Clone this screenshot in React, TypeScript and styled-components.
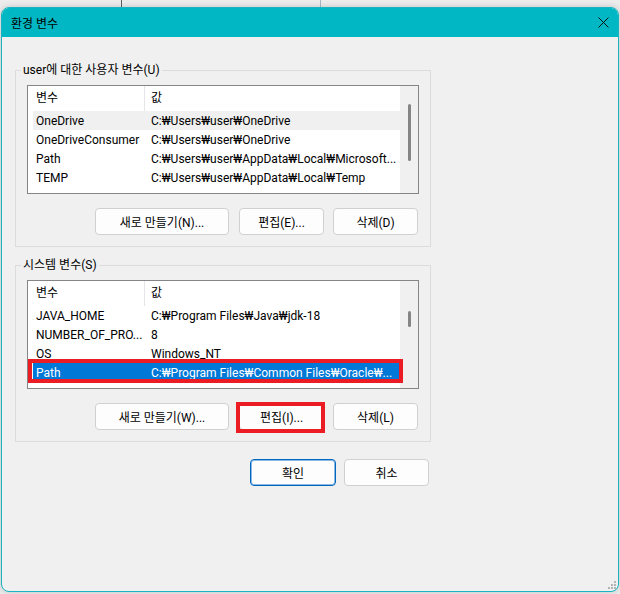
import { FC } from 'react';
import styled, { createGlobalStyle } from 'styled-components';

interface VarRow {
  name: string;
  value: string;
  state?: 'hover' | 'selected';
}

const userVars: VarRow[] = [
  { name: 'OneDrive', value: 'C:₩Users₩user₩OneDrive', state: 'hover' },
  { name: 'OneDriveConsumer', value: 'C:₩Users₩user₩OneDrive' },
  { name: 'Path', value: 'C:₩Users₩user₩AppData₩Local₩Microsoft...' },
  { name: 'TEMP', value: 'C:₩Users₩user₩AppData₩Local₩Temp' },
];

const systemVars: VarRow[] = [
  { name: 'JAVA_HOME', value: 'C:₩Program Files₩Java₩jdk-18' },
  { name: 'NUMBER_OF_PRO...', value: '8' },
  { name: 'OS', value: 'Windows_NT' },
  { name: 'Path', value: 'C:₩Program Files₩Common Files₩Oracle₩...', state: 'selected' },
];

interface VarListProps {
  rows: VarRow[];
  thumbTop: number;
  thumbHeight: number;
  markedRow?: number;
}

const HEADER_HEIGHT = 25;
const ROW_HEIGHT = 19;

const VarList: FC<VarListProps> = (props) => {
  return (
    <ListBoxStyled>
      <ListBodyStyled>
        <HeaderRowStyled>
          <HeaderCellStyled $first>변수</HeaderCellStyled>
          <HeaderCellStyled>값</HeaderCellStyled>
        </HeaderRowStyled>
        {props.rows.map((row) => (
          <RowStyled key={row.name} $state={row.state}>
            <CellStyled $first>{row.name}</CellStyled>
            <CellStyled>{row.value}</CellStyled>
          </RowStyled>
        ))}
      </ListBodyStyled>
      <TrackStyled>
        <ThumbStyled $top={props.thumbTop} $height={props.thumbHeight} />
      </TrackStyled>
      {props.markedRow !== undefined && <RowMarkStyled $row={props.markedRow} />}
    </ListBoxStyled>
  );
};

const App: FC = () => {
  return (
    <>
      <GlobalStyle />
      <DesktopStyled>
        <WindowStyled>
          <TitleBarStyled>
            <span>환경 변수</span>
            <svg width="11" height="11" viewBox="0 0 11 11">
              <path d="M0.5 0.5 L10.5 10.5 M10.5 0.5 L0.5 10.5" stroke="#111" strokeWidth="1" fill="none" />
            </svg>
          </TitleBarStyled>

          <ContentStyled>
            <GroupStyled>
              <LegendStyled>user에 대한 사용자 변수(U)</LegendStyled>
              <VarList rows={userVars} thumbTop={18} thumbHeight={57} />
              <ButtonRowStyled>
                <ButtonStyled $width={134} $space={10}>새로 만들기(N)...</ButtonStyled>
                <ButtonStyled $width={85} $space={9}>편집(E)...</ButtonStyled>
                <ButtonStyled $width={85}>삭제(D)</ButtonStyled>
              </ButtonRowStyled>
            </GroupStyled>

            <GroupStyled $gap={10}>
              <LegendStyled>시스템 변수(S)</LegendStyled>
              <VarList rows={systemVars} thumbTop={30} thumbHeight={16} markedRow={3} />
              <ButtonRowStyled>
                <ButtonStyled $width={134} $space={10}>새로 만들기(W)...</ButtonStyled>
                <ButtonStyled $width={85} $space={9} $marked>편집(I)...</ButtonStyled>
                <ButtonStyled $width={85}>삭제(L)</ButtonStyled>
              </ButtonRowStyled>
            </GroupStyled>

            <FooterStyled>
              <ButtonStyled $width={86} $space={8} $primary>확인</ButtonStyled>
              <ButtonStyled $width={85}>취소</ButtonStyled>
            </FooterStyled>
          </ContentStyled>

          <GripStyled width="9" height="9" viewBox="0 0 9 9">
            <rect x="6" y="0" width="2" height="2" fill="#b4b4b4" />
            <rect x="3" y="3" width="2" height="2" fill="#b4b4b4" />
            <rect x="6" y="3" width="2" height="2" fill="#b4b4b4" />
            <rect x="0" y="6" width="2" height="2" fill="#b4b4b4" />
            <rect x="3" y="6" width="2" height="2" fill="#b4b4b4" />
            <rect x="6" y="6" width="2" height="2" fill="#b4b4b4" />
          </GripStyled>
        </WindowStyled>
      </DesktopStyled>
    </>
  );
};

const GlobalStyle = createGlobalStyle`
  html, body {
    margin: 0;
    padding: 0;
  }

  body {
    width: 620px;
    height: 594px;
    overflow: hidden;
    background-color: #ececec;
    background-image: linear-gradient(
      to right,
      transparent 121px,
      #5e5e5e 121px,
      #5e5e5e 122px,
      transparent 122px,
      transparent 320px,
      #a6b8c6 320px,
      #a6b8c6 321px,
      transparent 321px
    );
    background-size: 100% 8px;
    background-repeat: no-repeat;
    font-family: Roboto, "Noto Sans CJK KR", sans-serif;
    font-size: 12px;
    color: #000;
  }
`;

const DesktopStyled = styled.div`
  box-sizing: border-box;
  width: 620px;
  height: 594px;
  padding: 7px 1px 0 1px;
`;

const WindowStyled = styled.div`
  position: relative;
  box-sizing: border-box;
  width: 618px;
  height: 585px;
  border: 1px solid #19b4c2;
  border-radius: 8px;
  overflow: hidden;
  background: #f0f0f0;
  box-shadow: 0 0 6px rgba(0, 0, 0, 0.18);
`;

const TitleBarStyled = styled.div`
  display: flex;
  align-items: center;
  justify-content: space-between;
  height: 29px;
  padding: 0 9px 0 9px;
  background: #00b7c3;
  font-size: 12px;

  & svg {
    display: block;
  }
`;

const ContentStyled = styled.div`
  display: flex;
  flex-direction: column;
  padding: 25px 0 0 13px;
`;

const GroupStyled = styled.fieldset<{ $gap?: number }>`
  box-sizing: border-box;
  width: 416px;
  min-width: 0;
  margin: ${(p) => p.$gap ?? 0}px 0 0 0;
  padding: 7px 11px 11px 11px;
  border: 1px solid #dcdcdc;
`;

const LegendStyled = styled.legend`
  margin-left: -6px;
  padding: 0 2px;
  line-height: 16px;
`;

const ListBoxStyled = styled.div`
  position: relative;
  box-sizing: border-box;
  display: flex;
  height: 109px;
  border: 1px solid #858585;
  background: #fff;
`;

const ListBodyStyled = styled.div`
  flex: 1;
  min-width: 0;
  overflow: hidden;
`;

const HeaderRowStyled = styled.div`
  display: grid;
  grid-template-columns: 117px 1fr;
  height: ${HEADER_HEIGHT}px;
`;

const HeaderCellStyled = styled.div<{ $first?: boolean }>`
  padding-left: ${(p) => (p.$first ? 8 : 6)}px;
  line-height: ${HEADER_HEIGHT - 1}px;
  border-right: ${(p) => (p.$first ? '1px solid #e5e5e5' : 'none')};
`;

const RowStyled = styled.div<{ $state?: 'hover' | 'selected' }>`
  display: grid;
  grid-template-columns: 111px 1fr;
  height: ${ROW_HEIGHT}px;
  margin-left: 5px;
  line-height: ${ROW_HEIGHT + 1}px;
  background: ${(p) =>
    p.$state === 'selected' ? '#0078d7' : p.$state === 'hover' ? '#f0f0f0' : 'transparent'};
  color: ${(p) => (p.$state === 'selected' ? '#fff' : '#000')};
`;

const CellStyled = styled.div<{ $first?: boolean }>`
  padding-left: ${(p) => (p.$first ? 3 : 7)}px;
  white-space: nowrap;
  overflow: hidden;
  text-overflow: ellipsis;
`;

const TrackStyled = styled.div`
  flex: 0 0 18px;
  background: #f0f0f0;
`;

const ThumbStyled = styled.div<{ $top: number; $height: number }>`
  width: 3px;
  height: ${(p) => p.$height}px;
  margin: ${(p) => p.$top}px 0 0 8px;
  border-radius: 2px;
  background: #858585;
`;

const RowMarkStyled = styled.div<{ $row: number }>`
  position: absolute;
  left: 0;
  top: ${(p) => HEADER_HEIGHT + p.$row * ROW_HEIGHT - 4}px;
  box-sizing: border-box;
  width: 375px;
  height: 24px;
  border: 4px solid #ec1c24;
`;

const ButtonRowStyled = styled.div`
  display: flex;
  justify-content: flex-end;
  margin-top: 14px;
  padding-right: 1px;
`;

const ButtonStyled = styled.button<{
  $width: number;
  $space?: number;
  $primary?: boolean;
  $marked?: boolean;
}>`
  position: relative;
  box-sizing: border-box;
  width: ${(p) => p.$width}px;
  height: 27px;
  margin-right: ${(p) => p.$space ?? 0}px;
  padding: 0;
  border: 1px solid ${(p) => (p.$primary ? '#0067c0' : '#d0d0d0')};
  border-radius: 4px;
  background: #fdfdfd;
  box-shadow: ${(p) => (p.$primary ? 'inset 0 0 0 1px rgba(0, 103, 192, 0.45)' : 'none')};
  font-family: inherit;
  font-size: 12px;
  color: #000;

  &::after {
    content: '';
    display: ${(p) => (p.$marked ? 'block' : 'none')};
    position: absolute;
    top: -2px;
    left: -4px;
    right: -2px;
    bottom: -4px;
    border: 4px solid #ec1c24;
  }
`;

const FooterStyled = styled.div`
  display: flex;
  justify-content: flex-end;
  width: 416px;
  margin-top: 17px;
  padding-right: 2px;
  box-sizing: border-box;
`;

const GripStyled = styled.svg`
  position: absolute;
  right: 1px;
  bottom: 1px;
`;

export default App;
